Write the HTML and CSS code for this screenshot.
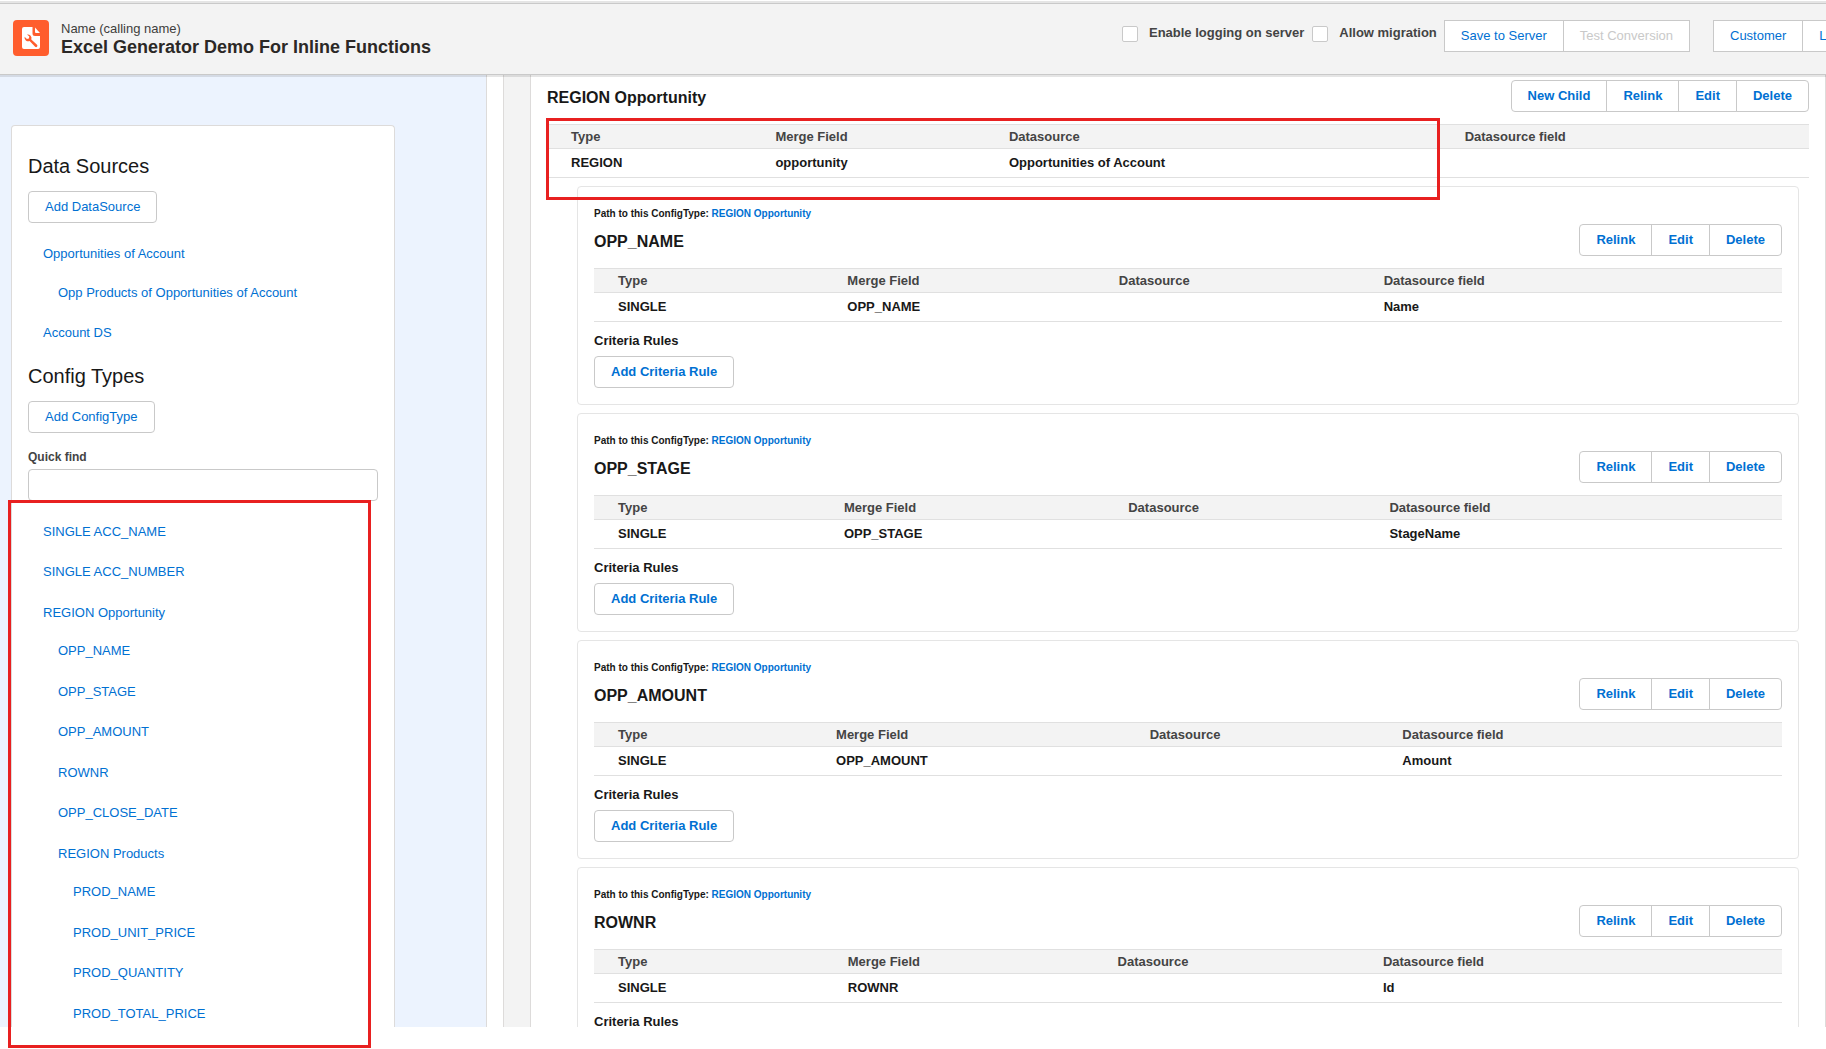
FILE: index.html
```
<!DOCTYPE html>
<html lang="en">
<head>
<meta charset="UTF-8">
<meta name="viewport" content="width=device-width, initial-scale=1.0">
<title>Excel Generator Demo For Inline Functions</title>
<link rel="stylesheet" href="styles.css">
</head>
<body>
  <header class="page-header">
    <svg class="header-icon" viewBox="0 0 36 36" aria-hidden="true">
      <rect width="36" height="36" rx="4" fill="#ff5d2d"/>
      <path fill="#fff" d="M11 7h8.500v6.500a2.500 2.500 0 0 0 2.500 2.500H27v11a2 2 0 0 1-2 2H11a2 2 0 0 1-2-2V9a2 2 0 0 1 2-2z"/>
      <path fill="#fff" d="M22 7.500l5 5.500h-4a1 1 0 0 1-1-1z"/>
      <path fill="#ff5d2d" d="M14 14.500a3.800 3.800 0 0 1 4.300 5l5.700 5.300a1.300 1.300 0 0 1-1.900 1.900l-5.500-5.600a3.800 3.800 0 0 1-5-4.300l2.300 2.100 2-.5.400-1.800z"/>
    </svg>
    <div class="header-title">
      <p>Name (calling name)</p>
      <h1>Excel Generator Demo For Inline Functions</h1>
    </div>
    <div class="header-options">
      <input type="checkbox" id="enableLogging">
      <label for="enableLogging">Enable logging on server</label>
      <input type="checkbox" id="allowMigration">
      <label for="allowMigration">Allow migration</label>
    </div>
    <div class="button-group square">
      <button type="button">Save to Server</button>
      <button type="button" disabled>Test Conversion</button>
    </div>
    <div class="button-group square more">
      <button type="button">Customer</button>
      <button type="button">Logs</button>
    </div>
  </header>

  <div class="workspace">
    <aside class="sidebar">
      <div class="sidebar-card">
        <h2>Data Sources</h2>
        <button type="button" class="button">Add DataSource</button>
        <ul class="tree">
          <li><a href="#">Opportunities of Account</a>
            <ul>
              <li><a href="#">Opp Products of Opportunities of Account</a></li>
            </ul>
          </li>
          <li><a href="#">Account DS</a></li>
        </ul>
        <h2>Config Types</h2>
        <button type="button" class="button">Add ConfigType</button>
        <label class="find-label" for="quickFind">Quick find</label>
        <input class="find-input" type="text" id="quickFind">
        <div class="config-list">
          <ul class="tree">
            <li><a href="#">SINGLE ACC_NAME</a></li>
            <li><a href="#">SINGLE ACC_NUMBER</a></li>
            <li><a href="#">REGION Opportunity</a>
              <ul>
                <li><a href="#">OPP_NAME</a></li>
                <li><a href="#">OPP_STAGE</a></li>
                <li><a href="#">OPP_AMOUNT</a></li>
                <li><a href="#">ROWNR</a></li>
                <li><a href="#">OPP_CLOSE_DATE</a></li>
                <li><a href="#">REGION Products</a>
                  <ul>
                    <li><a href="#">PROD_NAME</a></li>
                    <li><a href="#">PROD_UNIT_PRICE</a></li>
                    <li><a href="#">PROD_QUANTITY</a></li>
                    <li><a href="#">PROD_TOTAL_PRICE</a></li>
                  </ul>
                </li>
              </ul>
            </li>
          </ul>
          <div class="marker marker-list"></div>
        </div>
      </div>
    </aside>

    <main class="content">
      <section class="region">
        <div class="section-head">
          <h3>REGION Opportunity</h3>
          <div class="button-group">
            <button type="button">New Child</button>
            <button type="button">Relink</button>
            <button type="button">Edit</button>
            <button type="button">Delete</button>
          </div>
        </div>
        <div class="region-table">
          <table>
            <thead>
              <tr><th>Type</th><th>Merge Field</th><th>Datasource</th><th>Datasource field</th></tr>
            </thead>
            <tbody>
              <tr><td>REGION</td><td>opportunity</td><td>Opportunities of Account</td><td></td></tr>
            </tbody>
          </table>
          <div class="marker marker-region"></div>
        </div>

        <article class="config-card">
          <p class="path">Path to this ConfigType: <a href="#">REGION Opportunity</a></p>
          <div class="section-head">
            <h3>OPP_NAME</h3>
            <div class="button-group">
              <button type="button">Relink</button>
              <button type="button">Edit</button>
              <button type="button">Delete</button>
            </div>
          </div>
          <table>
            <thead>
              <tr><th>Type</th><th>Merge Field</th><th>Datasource</th><th>Datasource field</th></tr>
            </thead>
            <tbody>
              <tr><td>SINGLE</td><td>OPP_NAME</td><td></td><td>Name</td></tr>
            </tbody>
          </table>
          <h4>Criteria Rules</h4>
          <button type="button" class="button bold">Add Criteria Rule</button>
        </article>

        <article class="config-card">
          <p class="path">Path to this ConfigType: <a href="#">REGION Opportunity</a></p>
          <div class="section-head">
            <h3>OPP_STAGE</h3>
            <div class="button-group">
              <button type="button">Relink</button>
              <button type="button">Edit</button>
              <button type="button">Delete</button>
            </div>
          </div>
          <table>
            <thead>
              <tr><th>Type</th><th>Merge Field</th><th>Datasource</th><th>Datasource field</th></tr>
            </thead>
            <tbody>
              <tr><td>SINGLE</td><td>OPP_STAGE</td><td></td><td>StageName</td></tr>
            </tbody>
          </table>
          <h4>Criteria Rules</h4>
          <button type="button" class="button bold">Add Criteria Rule</button>
        </article>

        <article class="config-card">
          <p class="path">Path to this ConfigType: <a href="#">REGION Opportunity</a></p>
          <div class="section-head">
            <h3>OPP_AMOUNT</h3>
            <div class="button-group">
              <button type="button">Relink</button>
              <button type="button">Edit</button>
              <button type="button">Delete</button>
            </div>
          </div>
          <table>
            <thead>
              <tr><th>Type</th><th>Merge Field</th><th>Datasource</th><th>Datasource field</th></tr>
            </thead>
            <tbody>
              <tr><td>SINGLE</td><td>OPP_AMOUNT</td><td></td><td>Amount</td></tr>
            </tbody>
          </table>
          <h4>Criteria Rules</h4>
          <button type="button" class="button bold">Add Criteria Rule</button>
        </article>

        <article class="config-card">
          <p class="path">Path to this ConfigType: <a href="#">REGION Opportunity</a></p>
          <div class="section-head">
            <h3>ROWNR</h3>
            <div class="button-group">
              <button type="button">Relink</button>
              <button type="button">Edit</button>
              <button type="button">Delete</button>
            </div>
          </div>
          <table>
            <thead>
              <tr><th>Type</th><th>Merge Field</th><th>Datasource</th><th>Datasource field</th></tr>
            </thead>
            <tbody>
              <tr><td>SINGLE</td><td>ROWNR</td><td></td><td>Id</td></tr>
            </tbody>
          </table>
          <h4>Criteria Rules</h4>
          <button type="button" class="button bold">Add Criteria Rule</button>
        </article>
      </section>
    </main>
  </div>
</body>
</html>
```

FILE: styles.css
```
* {
  box-sizing: border-box;
}
body {
  margin: 0;
  height: 100vh;
  padding: 3px 0 22px;
  display: flex;
  flex-direction: column;
  overflow: hidden;
  font-family: "Liberation Sans", Arial, sans-serif;
  font-size: 13px;
  line-height: 1.5;
  color: #181818;
  background-color: #fff;
}
h1, h2, h3, h4, p, ul {
  margin: 0;
  padding: 0;
}
ul {
  list-style: none;
}
a {
  color: #0070d2;
  text-decoration: none;
}
button,
input {
  font-family: inherit;
  font-size: 13px;
}

/* header */
.page-header {
  display: flex;
  align-items: flex-start;
  flex-shrink: 0;
  height: 72px;
  padding: 16px 0 0 13px;
  border-top: 1px solid #c9c9c9;
  border-bottom: 1px solid #c9c9c9;
  background-color: #f3f3f3;
  box-shadow: 0 2px 0 rgba(0, 0, 0, 0.1), 0 -2px 0 rgba(0, 0, 0, 0.1);
  position: relative;
  z-index: 1;
}
.header-icon {
  width: 36px;
  height: 36px;
  margin-right: 12px;
  flex-shrink: 0;
}
.header-title {
  flex: 1;
  color: #3e3e3c;
  white-space: nowrap;
}
.header-title p {
  line-height: 18px;
}
.header-title h1 {
  font-size: 18px;
  line-height: 18px;
  color: #2b2826;
}
.header-options {
  display: flex;
  align-items: center;
  padding-top: 5px;
  margin-right: 7px;
  font-weight: bold;
  color: #444;
  white-space: nowrap;
}
.header-options label {
  line-height: 16px;
  padding-bottom: 2px;
}
.header-options input {
  appearance: none;
  width: 16px;
  height: 16px;
  margin: 0 11px 0 8px;
  border: 1px solid #c9c9c9;
  border-radius: 2px;
  background-color: #fff;
}

/* buttons */
.button,
.button-group button {
  height: 32px;
  padding: 0 16px;
  border: 1px solid #c9c9c9;
  border-radius: 4px;
  background-color: #fff;
  color: #0070d2;
  line-height: 30px;
  white-space: nowrap;
  cursor: pointer;
}
.button {
  display: block;
}
.bold {
  font-weight: bold;
}
.button-group {
  display: flex;
  flex-shrink: 0;
}
.button-group button {
  border-radius: 0;
  font-weight: bold;
}
.button-group button + button {
  margin-left: -1px;
}
.button-group button:first-child {
  border-radius: 4px 0 0 4px;
}
.button-group button:last-child {
  border-radius: 0 4px 4px 0;
}
.button-group.square button {
  border-radius: 0;
  font-weight: normal;
}
.button-group button:disabled {
  color: #c9c9c9;
  cursor: default;
}
.more {
  width: 113px;
  margin-left: 23px;
  overflow: hidden;
}

/* layout */
.workspace {
  display: flex;
  flex: 1;
  min-height: 0;
}
.sidebar {
  display: flex;
  flex-shrink: 0;
  width: 487px;
  padding: 50px 91px 0 11px;
  border-right: 1px solid #dddbda;
  background-color: #ecf3fe;
}
.sidebar-card {
  flex: 1;
  padding: 25px 16px 0;
  border: 1px solid #dddbda;
  border-bottom: none;
  border-radius: 4px 4px 0 0;
  background-color: #fff;
}
.sidebar-card h2 {
  margin-bottom: 10px;
  font-size: 20px;
  font-weight: normal;
  line-height: 30px;
}
.tree {
  padding: 21px 0 18px 15px;
}
.tree a {
  display: block;
}
.tree ul {
  padding: 19px 0 0 15px;
}
.tree li + li {
  margin-top: 21px;
}
.find-label {
  display: block;
  margin-top: 15px;
  font-size: 12px;
  font-weight: bold;
  line-height: 18px;
  color: #444;
}
.find-input {
  display: block;
  width: 100%;
  height: 32px;
  margin-top: 3px;
  padding: 0 12px;
  border: 1px solid #c9c9c9;
  border-radius: 4px;
}
.config-list {
  position: relative;
}

/* red outlines over the content */
.marker {
  position: absolute;
  border: 3px solid #e82020;
  pointer-events: none;
}
.marker-list {
  top: -1px;
  left: -20px;
  right: 7px;
  height: 548px;
}
.marker-region {
  top: -6px;
  left: -1px;
  width: 894px;
  height: 82px;
}

/* main content */
.content {
  display: flex;
  flex: 1;
  min-width: 0;
  margin-left: 16px;
  padding-left: 26px;
  border-left: 1px solid #dddbda;
  background-color: #f3f3f3;
  overflow: hidden;
}
.region {
  flex: 1;
  padding: 5px 16px 0;
  border: 1px solid #dddbda;
  border-width: 0 1px;
  background-color: #fff;
}
.section-head {
  display: flex;
  justify-content: space-between;
  align-items: flex-start;
  margin-bottom: 8px;
}
.section-head h3 {
  font-size: 16px;
  line-height: 36px;
}
.region-table {
  position: relative;
  margin-bottom: 8px;
}
table {
  width: 100%;
  border-collapse: collapse;
  text-align: left;
  font-weight: bold;
}
th,
td {
  padding: 0 8px;
  border: 1px solid #e0e0e0;
  border-width: 1px 0;
  white-space: nowrap;
}
th {
  height: 24px;
  color: #444;
  background-color: #f3f3f3;
}
td {
  height: 29px;
}
th:first-child,
td:first-child {
  padding-left: 24px;
}
th:last-child,
td:last-child {
  padding-right: 24px;
}
.config-card {
  margin: 0 10px 8px 30px;
  padding: 20px 16px 16px;
  border: 1px solid #e5e5e5;
  border-radius: 4px;
}
.path {
  margin-bottom: 3px;
  font-size: 10px;
  font-weight: bold;
  line-height: 14px;
}
.config-card h4 {
  margin: 9px 0 6px;
  font-size: 13px;
  line-height: 19px;
}
```
